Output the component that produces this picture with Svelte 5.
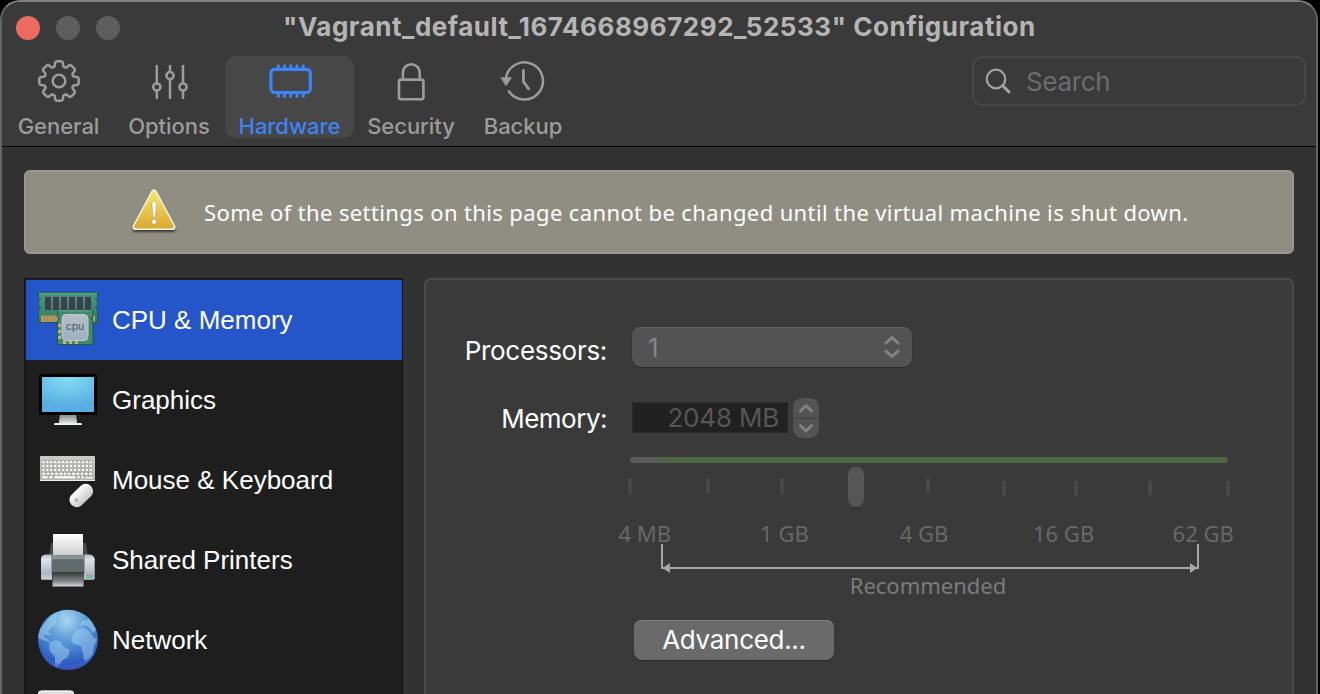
<script>
  const tabs = [
    { id: 'general', label: 'General', width: 117 },
    { id: 'options', label: 'Options', width: 106 },
    { id: 'hardware', label: 'Hardware', width: 129, active: true },
    { id: 'security', label: 'Security', width: 114 },
    { id: 'backup', label: 'Backup', width: 110 }
  ];
  const devices = [
    { id: 'cpu', label: 'CPU & Memory', active: true },
    { id: 'graphics', label: 'Graphics' },
    { id: 'mouse', label: 'Mouse & Keyboard' },
    { id: 'printer', label: 'Shared Printers' },
    { id: 'network', label: 'Network' },
    { id: 'disk', label: '' }
  ];
  const ticks = [
    [628, 478], [706, 478], [780, 478], [926, 478],
    [1002, 480], [1074, 480], [1148, 480], [1226, 480]
  ];
  const sizes = ['4 MB', '1 GB', '4 GB', '16 GB', '62 GB'];

  // Eight-tooth gear outline.
  const gear = (() => {
    const c = 22;
    const pts = [];
    const profile = [[-0.34, 14.9], [-0.27, 15.8], [-0.22, 18.4], [-0.17, 19.5], [-0.11, 19.8], [0.11, 19.8], [0.17, 19.5], [0.22, 18.4], [0.27, 15.8], [0.34, 14.9]];
    for (let i = 0; i < 8; i++) {
      for (const [a, r] of profile) {
        const t = (i * Math.PI) / 4 + a - Math.PI / 2;
        pts.push(`${(c + r * Math.cos(t)).toFixed(2)} ${(c + r * Math.sin(t)).toFixed(2)}`);
      }
    }
    return 'M' + pts.join('L') + 'Z';
  })();

  const keyRows = [[0, 12, 4], [3.6, 12, 4], [7.6, 12, 4], [11.6, 11, 4.4]];
</script>

<div class="window">
  <header>
    <div class="titlebar">
      <div class="lights"><i class="close"></i><i></i><i></i></div>
      <h1>"Vagrant_default_1674668967292_52533" Configuration</h1>
    </div>
    <div class="toolbar">
      <nav>
        {#each tabs as tab}
          <button class="tab {tab.id}" class:active={tab.active} style:width="{tab.width}px">
            <svg width="48" height="46" viewBox="0 0 48 46" fill="none" stroke="currentColor" stroke-width="2.5" stroke-linecap="round" stroke-linejoin="round">
              {#if tab.id === 'general'}
                <g transform="translate(2 0)"><path d={gear} /><circle cx="22" cy="22" r="6.3" /></g>
              {:else if tab.id === 'options'}
                <path d="M11.8 7V23.7M11.8 31.5V39M25 7V12.2M25 20.2V39M38 7V23.7M38 31.5V39" />
                <circle cx="11.8" cy="28" r="3.6" />
                <circle cx="25" cy="16.6" r="3.6" />
                <circle cx="38" cy="28" r="3.6" />
              {:else if tab.id === 'hardware'}
                <rect x="4.9" y="10.3" width="39.4" height="23.2" rx="3.6" stroke-width="3.2" />
                <path stroke-width="2.9" d="M12.3 9V6.7M18.5 9V6.7M24.7 9V6.7M31 9V6.7M37.3 9V6.7M12.3 35V37.6M18.5 35V37.6M24.7 35V37.6M31 35V37.6M37.3 35V37.6" />
              {:else if tab.id === 'security'}
                <rect x="12" y="20.6" width="24.4" height="19.6" rx="2" stroke-width="2.6" />
                <path d="M15.9 20V14C15.9 2.4 32.7 2.4 32.7 14V20" />
              {:else}
                <path d="M6.9 19.5A18.6 18.6 0 1 1 9.9 32.3" />
                <path d="M24.4 11.5V22.5L29.5 29.8" stroke-width="2.8" />
                <path d="M2.3 18.8H12.3L7.2 26.3Z" fill="currentColor" stroke-width="1" />
              {/if}
            </svg>
            <span>{tab.label}</span>
          </button>
        {/each}
      </nav>
      <div class="search">
        <svg width="28" height="28" viewBox="0 0 28 28" fill="none" stroke="#a3a3a3" stroke-width="2.2" stroke-linecap="round">
          <circle cx="12" cy="12" r="9.3" /><path d="M18.8 18.8L25 25" stroke-width="3" />
        </svg>
        <span>Search</span>
      </div>
    </div>
  </header>

  <div class="notice">
    <svg width="50" height="52" viewBox="0 0 50 52">
      <defs>
        <linearGradient id="warn" x2="0" y2="1"><stop offset="0" stop-color="#f5e268" /><stop offset="1" stop-color="#dbac35" /></linearGradient>
        <filter id="soft" x="-20%" y="-20%" width="140%" height="150%"><feDropShadow dx="0" dy="2" stdDeviation="1.3" flood-opacity=".6" /></filter>
      </defs>
      <g transform="translate(0 1)">
        <path d="M25 5.5L43.5 40H6.5Z" fill="#fffdf2" stroke="#f8f5df" stroke-width="6" stroke-linejoin="round" filter="url(#soft)" />
        <path d="M25 6.2L42.8 39.4H7.2Z" fill="url(#warn)" stroke="#e6c34c" stroke-width="0" />
        <path d="M25 6.2L42.8 39.4H7.2Z" fill="url(#warn)" stroke="url(#warn)" stroke-width="4" stroke-linejoin="round" />
        <path d="M22.7 15.5Q25.2 13 27.7 15.5L26.4 30.2Q25.2 31.5 24 30.2Z" fill="#fff" stroke="#aa8b35" stroke-width=".5" />
        <circle cx="25.2" cy="34.7" r="2.5" fill="#fff" stroke="#aa8b35" stroke-width=".5" />
      </g>
    </svg>
    <span>Some of the settings on this page cannot be changed until the virtual machine is shut down.</span>
  </div>

  <main>
    <ul class="devices">
      {#each devices as device}
        <li class={device.id} class:active={device.active}>
          <svg width="64" height="64" viewBox="0 0 64 64">
            {#if device.id === 'cpu'}
              <defs>
                <linearGradient id="ram" x2="0" y2="1"><stop offset="0" stop-color="#479b78" /><stop offset="1" stop-color="#367b60" /></linearGradient>
                <linearGradient id="die" x2="0" y2="1"><stop offset="0" stop-color="#b5bfc9" /><stop offset="1" stop-color="#9cafc0" /></linearGradient>
              </defs>
              <path d="M2.5 4.5H61.5V9L59.5 11L61.5 13V17L59.5 19.5L61.5 22V34.5H2.5V22L4.5 19.5L2.5 17V13L4.5 11L2.5 9Z" fill="url(#ram)" stroke="#26594a" />
              <path d="M3 5.4H61" stroke="#5aa582" />
              {#each [0, 1, 2, 3, 4, 5] as i}
                <rect x={9 + i * 8} y="8" width="6" height="14" fill="#3c4050" /><path d="M{9 + i * 8} 8.5h6" stroke="#6c7080" />
              {/each}
              <path d="M5 27.5H23V34H5ZM57 27.5H59V34H57Z" fill="#b09c62" />
              <path d="M8 28V34M11 28V34M14 28V34M17 28V34M20 28V34" stroke="#9a8450" stroke-width=".8" />
              <path d="M22 22H56L57 23V28L55 31L57 33V56.5H21.5V33L23 31L21.5 28Z" fill="#408b6c" stroke="#24594a" />
              <path d="M22 22.8H56" stroke="#65ae8c" />
              <path d="M22 37.5h3M22 43.5h3M22 49.5h3M27 54.5h3M33 54.5h3M39 54.5h3" stroke="#cbb375" stroke-width="3" />
              <rect x="26" y="26.5" width="26" height="26" rx="4" fill="url(#die)" stroke="#c0cbd6" />
              <text x="39" y="42.3" text-anchor="middle" font-size="10.4" fill="#4b5966">cpu</text>
            {:else if device.id === 'graphics'}
              <defs>
                <radialGradient id="screen" cx=".5" cy="0" r=".85"><stop offset="0" stop-color="#86dff5" /><stop offset="1" stop-color="#58aee2" /></radialGradient>
                <linearGradient id="stand" x2="0" y2="1"><stop offset="0" stop-color="#777" /><stop offset="1" stop-color="#dedfdf" /></linearGradient>
              </defs>
              <path d="M24 45H40L41 55H23Z" fill="url(#stand)" />
              <path d="M18.5 55H45.5L46 57H18Z" fill="#eff0ef" />
              <rect x="3" y="6" width="58" height="41" rx="2.5" fill="#000" />
              <rect x="6" y="9" width="52" height="35" fill="url(#screen)" />
            {:else if device.id === 'mouse'}
              <defs>
                <linearGradient id="board" x2="0" y2="1"><stop offset="0" stop-color="#cbcbc8" /><stop offset="1" stop-color="#b8b8b4" /></linearGradient>
                <linearGradient id="body" x2="0" y2="1"><stop offset="0" stop-color="#fff" /><stop offset="1" stop-color="#c8c8c8" /></linearGradient>
              </defs>
              <rect x="4" y="8" width="55" height="25" rx="1" fill="url(#board)" />
              <path d="M4 32.5H59" stroke="#ededeb" />
              {#each keyRows as [y, n, w]}
                {#each Array(n + 1) as _, i}
                  <rect x={6 + i * (51 / (n + 1))} y={12.7 + y} width={w - 1} height="2.8" fill="#fafafa" stroke="#777" stroke-width=".35" />
                {/each}
              {/each}
              <path d="M6 27.7h6v3H6zM13 27.7h4v3h-4zM18 27.7h22v3H18zM41 27.7h3v3h-3zM45 27.7h3v3h-3zM49 28.5h8v2.2h-8z" fill="#fafafa" stroke="#777" stroke-width=".35" />
              <rect x="31.8" y="40.2" width="27" height="14.5" rx="7" transform="rotate(-44 45.3 47.5)" fill="url(#body)" />
              <circle cx="40.4" cy="52.2" r="1.6" fill="#aaa" />
            {:else if device.id === 'printer'}
              <defs>
                <linearGradient id="sheet" x2="0" y2="1"><stop offset="0" stop-color="#fff" /><stop offset="1" stop-color="#ccc" /></linearGradient>
                <linearGradient id="side" x2="0" y2="1"><stop offset="0" stop-color="#b2bac5" /><stop offset=".2" stop-color="#e0e4ea" /><stop offset=".75" stop-color="#aeb8c2" /><stop offset="1" stop-color="#cdd2d6" /></linearGradient>
                <linearGradient id="tray" x2="0" y2="1"><stop offset="0" stop-color="#343738" /><stop offset=".65" stop-color="#858889" /><stop offset="1" stop-color="#d3d5d6" /></linearGradient>
              </defs>
              <path d="M15 15H50L52 28H13Z" fill="#454b4b" />
              <rect x="17" y="6" width="30" height="22" fill="url(#sheet)" />
              <path d="M5 51V30Q6 26.5 10 26.5H16V51.8H7Q5 51.8 5 51ZM48 26.5H54Q58 27 58.7 31V51Q58 51.8 57 51.8H48Z" fill="url(#side)" />
              <rect x="15.5" y="27" width="33" height="18" fill="#606a6c" /><path d="M15.5 29.3h33" stroke="#899494" stroke-width="4" />
              <path d="M16.5 44H48L47.5 58.5H16.5Z" fill="url(#tray)" />
              <rect x="50" y="46.5" width="7.5" height="4.3" fill="#9ba4ab" /><path d="M51 48.8h2.5" stroke="#58df83" stroke-width="2" /><path d="M54.5 48.8h2" stroke="#4dbdf0" stroke-width="2" />
            {:else if device.id === 'network'}
              <defs>
                <radialGradient id="globe" cx=".48" cy=".18" r=".85"><stop offset="0" stop-color="#a9d8ee" /><stop offset=".38" stop-color="#5b9dd8" /><stop offset=".75" stop-color="#3468c5" /><stop offset="1" stop-color="#2447b7" /></radialGradient>
                <clipPath id="disc"><circle cx="32" cy="31.7" r="30" /></clipPath>
              </defs>
              <circle cx="32" cy="31.7" r="30" fill="url(#globe)" />
              <g clip-path="url(#disc)" fill="#a7d3f2" fill-opacity=".5">
                <path d="M3 22L13 10L19 5L22 8L19 11L21 14L15 20L12 24L15 27L12 28L9 26L8 29L12 31L14 34L4 31L1 28Z" />
                <path d="M14 34L20 32L25 34L27 38L34 42L32 49L27 52L22 58L19 62L19 49L14 43L13 38Z" />
                <path d="M36 28L41 22L48 20L53 23L58 30L61 31L58 38L57 46L51 54L48 52L47 45L45 38L38 36L35 32Z" />
                <path d="M43 19L46 13L53 11L55 13L60 22L57 25L52 18L47 17Z" />
                <path d="M24 3L31 2L29 8L25 11Z" fill-opacity=".35" />
              </g>
              <path d="M5 45Q31 70 59 45Q51 62 32 62Q13 62 5 45" fill="#3f65cd" opacity=".5" />
            {:else}
              <rect x="2" y="2.5" width="36" height="40" rx="3" fill="#ddd" /><path d="M5 3.2h30" stroke="#fff" />
            {/if}
          </svg>
          <span>{device.label}</span>
        </li>
      {/each}
    </ul>

    <section>
      <div class="row processors">
        <label for="cpu-count">Processors:</label>
        <button class="select" id="cpu-count"><span>1</span>
          <svg width="16" height="24" viewBox="0 0 16 24" fill="none" stroke="#858585" stroke-width="3" stroke-linecap="round" stroke-linejoin="round"><path d="M2 8L8 2.5L14 8M2 16L8 21.5L14 16" /></svg>
        </button>
      </div>
      <div class="row memory">
        <label for="mem">Memory:</label>
        <div class="field" id="mem"><span>2048 MB</span></div>
        <svg class="stepper" width="26" height="40" viewBox="0 0 26 40" fill="none">
          <rect width="26" height="40" rx="9" fill="#535353" /><path d="M0 20H26" stroke="#444" stroke-width="1.5" />
          <path d="M7.5 13L13 7.5L18.5 13M7.5 27.5L13 33L18.5 27.5" stroke="#828282" stroke-width="3" stroke-linecap="round" stroke-linejoin="round" />
        </svg>
      </div>
      <div class="track"></div>
      <svg class="ticks" width="620" height="42" viewBox="620 466 620 42">
        {#each ticks as [x, y]}<rect {x} {y} width="4" height="16" rx="1.5" fill="#484848" />{/each}
        <rect x="848" y="467.5" width="16" height="40" rx="7.5" fill="#303030" />
        <rect x="848" y="467" width="16" height="40" rx="7.5" fill="#565656" />
      </svg>
      <div class="sizes">{#each sizes as size}<span>{size}</span>{/each}</div>
      <svg class="bracket" width="540" height="30" viewBox="0 0 540 30">
        <path d="M2 0V24H538V0" fill="none" stroke="#a6a6a6" stroke-width="2" />
        <path d="M2.5 24L10 19V29ZM537.5 24L530 19V29Z" fill="#a6a6a6" />
      </svg>
      <p><span>Recommended</span></p>
      <button class="advanced"><span>Advanced...</span></button>
    </section>
  </main>
</div>

<style>
  :global(body) { background: #000; margin: 0; overflow: hidden; }
  * { box-sizing: border-box; }
  svg { display: block; flex: none; }
  button { border: 0; padding: 0; background: none; font: inherit; color: inherit; }
  span, label, h1 { white-space: nowrap; }
  .window { width: 1318px; height: 694px; overflow: hidden; background: #323232; border: 2px solid #656565; border-top-color: #808080; border-bottom: 0; border-radius: 20px 20px 0 0; font-family: Inter, sans-serif; }
  header { height: 145px; background: #3a3a3a; border-bottom: 1px solid #000; }
  .titlebar { height: 54px; display: grid; grid-template-columns: 1fr; }
  .titlebar > * { grid-area: 1 / 1; }
  .lights { display: flex; gap: 16px; padding: 14px 0 0 14px; }
  .lights i { width: 24px; height: 24px; border-radius: 50%; background: #5e5e5e; }
  .lights .close { background: #ed6a5f; }
  h1 { margin: 0; padding-left: 281px; font-size: 26px; font-weight: 700; line-height: 50px; color: #b5b5b5; letter-spacing: .53px; }
  .toolbar { display: flex; justify-content: space-between; padding-right: 10px; }
  nav { display: flex; }
  .tab { height: 82px; display: flex; flex-direction: column; align-items: center; justify-content: flex-start; border-radius: 11px; color: #9c9c9c; padding-top: 3px; }
  .tab.general { padding-right: 4px; }
  .tab.options { padding-right: 6px; }
  .tab.active { color: #3d84f6; background: #474747; }
  .tab span { font-size: 22px; line-height: 28px; margin-top: 7px; font-weight: 500; letter-spacing: -.05px; }
  .search { width: 334px; height: 50px; border: 2px solid #474747; border-radius: 10px; display: flex; align-items: center; gap: 14px; padding-left: 10px; }
  .search span { font-size: 26px; color: #6c6c6c; letter-spacing: -.35px; }
  .notice { margin: 23px 22px 0; height: 84px; border: 2px solid #9b998e; border-radius: 6px; background: #908e82; display: flex; align-items: center; padding-left: 103px; color: #fff; }
  .notice span { font: 22px/30px "Noto Sans", sans-serif; margin-left: 25px; letter-spacing: .38px; }
  main { display: flex; gap: 21px; padding: 24px 22px 0; }
  .devices { list-style: none; margin: 0; padding: 1px 0 0 1px; width: 379px; height: 482px; background: #1e1e1e; border: 1px solid #151515; border-right-color: #111; overflow: hidden; color: #fff; font: 26px "Liberation Sans", sans-serif; }
  .devices li { height: 80px; display: flex; align-items: center; gap: 12px; padding-left: 10px; }
  .devices li.active { background: #2456ca; }
  .devices svg { font-family: Inter, sans-serif; }
  section { width: 870px; height: 480px; border: 2px solid #4a4a4a; border-radius: 7px; background: #3a3a3a; padding-top: 47px; flex: none; }
  .row { display: grid; grid-template-columns: 181px auto auto; column-gap: 25px; justify-content: start; color: #fff; font-size: 26px; }
  .row label { justify-self: end; line-height: 32px; letter-spacing: -.3px; }
  .select { width: 280px; height: 40px; border-radius: 9px; background: #535353; box-shadow: inset 0 1px #636363, 0 1px 1px #2b2b2b; display: flex; align-items: center; justify-content: space-between; padding: 0 12px 0 16px; color: #858585; }
  .processors label { padding-top: 8px; }
  .memory { margin-top: 31px; height: 40px; }
  .memory label { padding-top: 5px; letter-spacing: -.5px; }
  .field { width: 156px; height: 31px; margin-top: 4px; background: #212121; border: 1px solid #292929; color: #565656; text-align: right; line-height: 30px; padding-right: 8px; letter-spacing: -.2px; }
  .stepper { margin-left: -20px; }
  .track { width: 598px; height: 6px; margin: 19px 0 0 204px; border-radius: 3px; background: linear-gradient(90deg, #5b5b5b 0 18px, #4e6543 45px); }
  .ticks { margin: 3px 0 0 194px; }
  .sizes { width: 698px; margin: 10px 0 0 149px; display: grid; grid-template-columns: repeat(5, 1fr); text-align: center; font: 22px/30px "Noto Sans", sans-serif; color: #686868; }
  .bracket { margin: -4px 0 0 234px; }
  p { margin: -4px 0 0 149px; width: 706px; text-align: center; font: 22px/30px "Noto Sans", sans-serif; color: #7b7b7b; }
  .advanced { display: block; width: 200px; height: 40px; margin: 20px 0 0 208px; border-radius: 8px; background: #6a6a6a; box-shadow: inset 0 1px #818181, 0 1px 1px #282828; color: #fff; font-size: 26px; line-height: 38px; letter-spacing: -.3px; }
</style>
